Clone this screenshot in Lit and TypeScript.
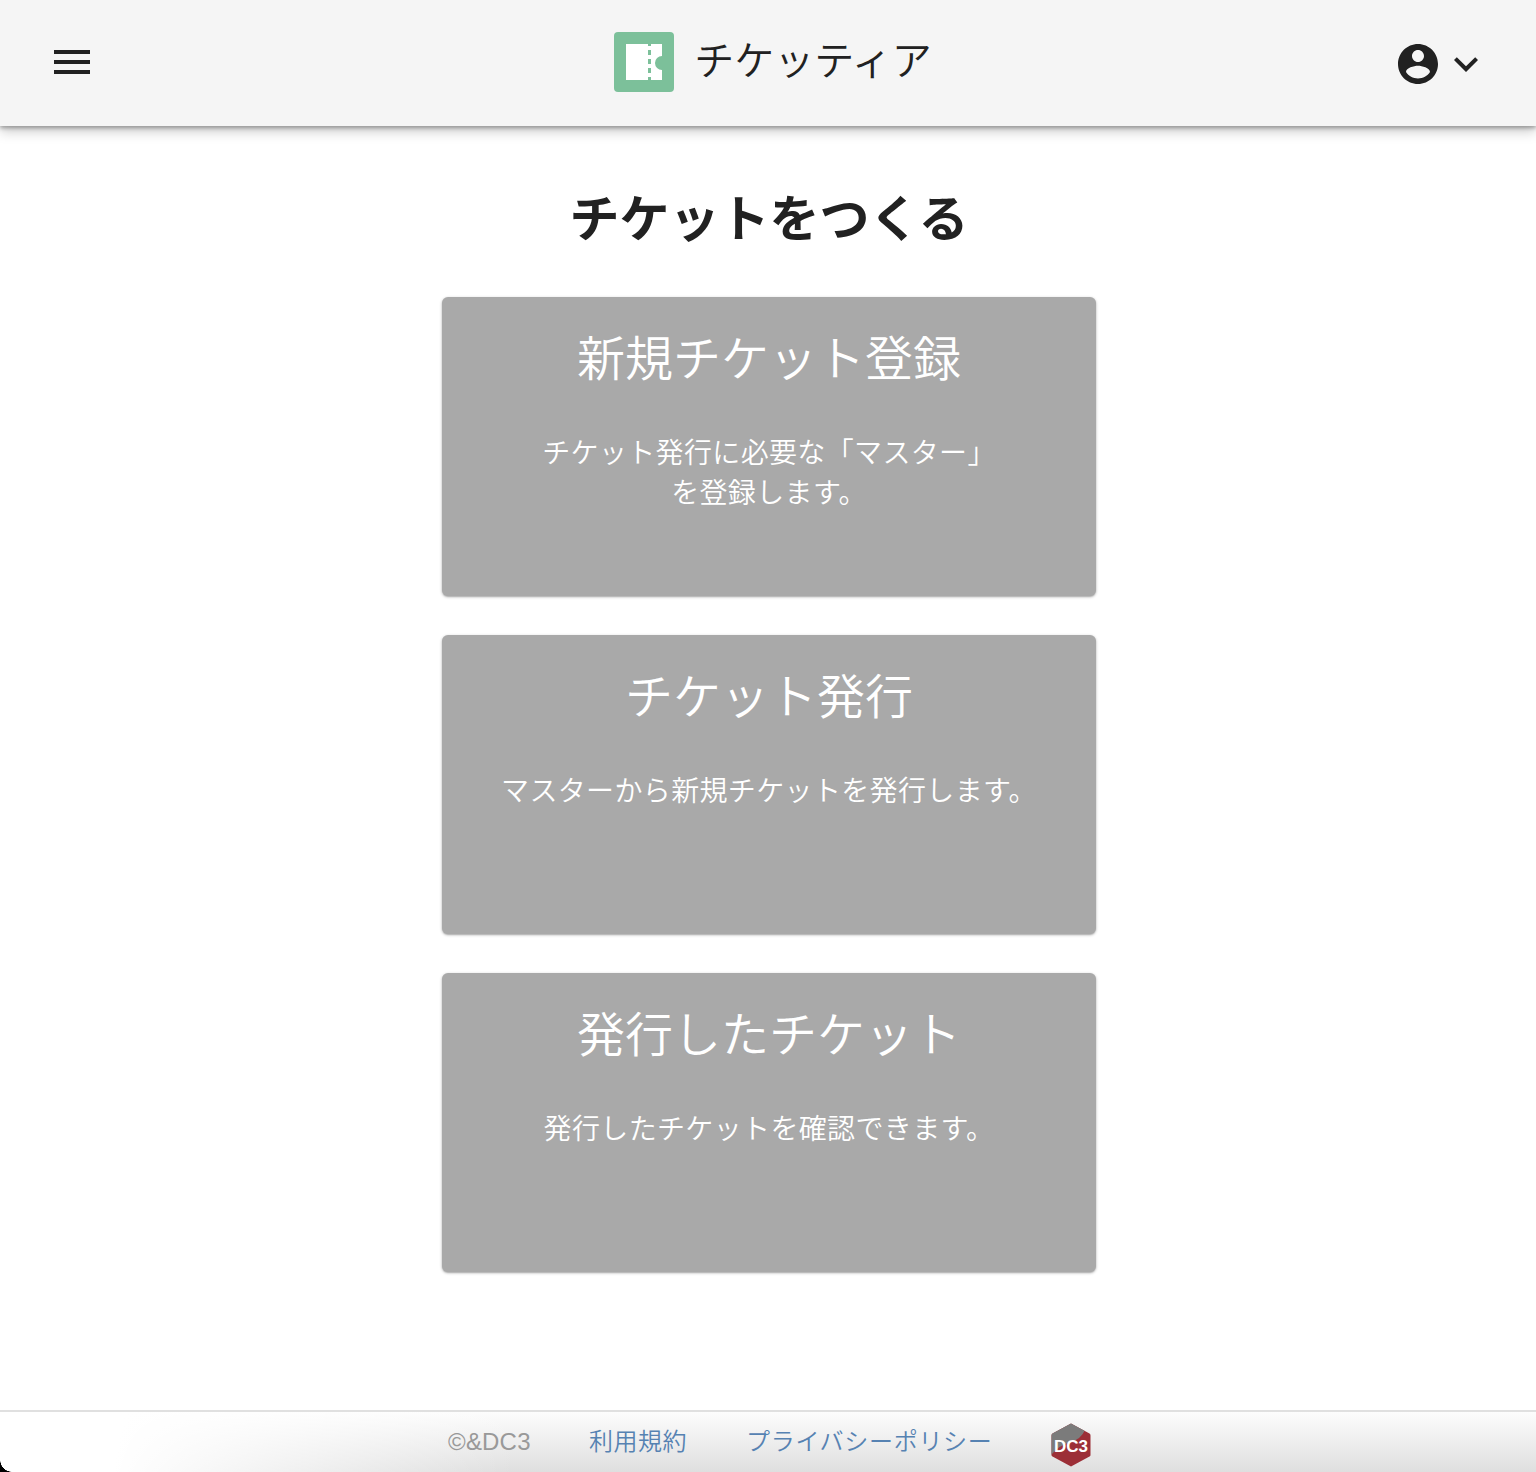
import { LitElement, html, css, svg } from "lit";
import { customElement } from "lit/decorators.js";

const CARDS = [
  { title: "新規チケット登録", lines: ["チケット発行に必要な「マスター」", "を登録します。"] },
  { title: "チケット発行", lines: ["マスターから新規チケットを発行します。"] },
  { title: "発行したチケット", lines: ["発行したチケットを確認できます。"] },
];

const menuIcon = svg`<svg class="menu" viewBox="0 0 36 24" width="36" height="24" aria-hidden="true"><path fill="#212121" d="M0 0h36v4H0zM0 10h36v4H0zM0 20h36v4H0z"/></svg>`;

const logo = svg`<svg class="logo" viewBox="0 0 60 60" width="60" height="60" aria-hidden="true">
  <rect width="60" height="60" rx="4" fill="#7cc09a"/>
  <path fill="#fff" d="M12 12h36v12a7 7 0 0 0 0 14v10H12z"/>
  <path fill="#7cc09a" d="M34 12h3v2h-3zM34 18h3v5h-3zM34 27h3v5h-3zM34 36h3v5h-3zM34 45h3v3h-3z"/>
</svg>`;

const account = svg`<svg viewBox="0 0 24 24" width="48" height="48" aria-hidden="true"><path fill="#212121" d="M12 2C6.48 2 2 6.48 2 12s4.48 10 10 10 10-4.48 10-10S17.52 2 12 2zm0 3c1.66 0 3 1.34 3 3s-1.34 3-3 3-3-1.34-3-3 1.34-3 3-3zm0 14.2c-2.5 0-4.71-1.28-6-3.22.03-1.99 4-3.08 6-3.08 1.99 0 5.97 1.09 6 3.08-1.29 1.94-3.5 3.22-6 3.22z"/></svg>`;

const chevron = svg`<svg viewBox="0 0 24 24" width="48" height="48" aria-hidden="true"><path fill="#212121" d="M16.59 8.59L12 13.17 7.41 8.59 6 10l6 6 6-6z"/></svg>`;

const dc3 = svg`<svg class="dc3" viewBox="0 0 40 44" width="40" height="44" aria-hidden="true">
  <defs><clipPath id="hex"><path d="M20 0.5 38.5 10.5Q39.5 11 39.5 12.5V32Q39.5 33 38.5 33.5L20 43.5 1.5 33.5Q0.5 33 0.5 32V12.5Q0.5 11 1.5 10.5z"/></clipPath></defs>
  <g clip-path="url(#hex)">
    <rect width="40" height="44" fill="#9c2f37"/>
    <path fill="#7b7b7b" d="M0 0H34V7Q30 16 20 19 8 22 0 32z"/>
  </g>
  <text x="20" y="29" text-anchor="middle" class="dc3-text" textLength="34" lengthAdjust="spacingAndGlyphs">DC3</text>
</svg>`;

@customElement("app-root")
export class AppRoot extends LitElement {
  static styles = css`
    :host {
      display: block;
      background: #fff;
      font-family: "Liberation Sans", "Noto Sans CJK JP", sans-serif;
      color: #212121;
    }
    .page {
      position: relative;
      min-height: 1472px;
      display: flex;
      flex-direction: column;
      overflow: hidden;
    }
    header {
      height: 126px;
      box-sizing: border-box;
      padding: 0 46px 2px 54px;
      background: #f5f5f5;
      display: grid;
      grid-template-columns: 1fr auto 1fr;
      align-items: center;
      box-shadow: 0 2px 4px rgba(0,0,0,.3), 0 5px 12px rgba(0,0,0,.22);
      position: relative;
      z-index: 1;
    }
    .menu { display: block; }
    .brand {
      display: flex;
      align-items: center;
      gap: 20px;
      margin-left: 2px;
    }
    .logo { display: block; }
    .brand span {
      font-size: 40px;
      line-height: 60px;
      margin-bottom: 9px;
      font-family: "Noto Sans CJK JP", sans-serif;
      font-weight: 350;
      color: #212121;
    }
    .user {
      justify-self: end;
      display: flex;
      margin-top: 4px;
    }
    .user svg { display: block; }
    main {
      flex: 1;
      display: flex;
      flex-direction: column;
      align-items: center;
      padding-left: 2px;
    }
    h1 {
      margin: 58px 0 51px;
      font-size: 50px;
      line-height: 62px;
      font-weight: 700;
      color: #212121;
      font-family: "Noto Sans CJK JP", sans-serif;
    }
    .cards {
      display: flex;
      flex-direction: column;
      gap: 39px;
    }
    .card {
      width: 654px;
      height: 299px;
      box-sizing: border-box;
      background: #a9a9a9;
      border-radius: 6px;
      box-shadow: 0 1px 3px rgba(0,0,0,.3), 0 1px 1px rgba(0,0,0,.1);
      color: #fff;
      text-align: center;
      padding-top: 24px;
      font-family: "Noto Sans CJK JP", sans-serif;
    }
    .card h2 {
      margin: 0;
      font-size: 48px;
      line-height: 68px;
      font-weight: 350;
    }
    .card p {
      margin: 42px 0 0;
      font-size: 28px;
      line-height: 40px;
      font-weight: 350;
      letter-spacing: 0.35px;
    }
    footer {
      height: 62px;
      border-top: 2px solid #e0e0e0;
      box-sizing: border-box;
      background:
        linear-gradient(100deg, #fff 0%, #fff 8%, rgba(255,255,255,0) 34%),
        linear-gradient(#fdfdfd, #dfdfdf);
      display: flex;
      align-items: flex-start;
      padding: 14px 0 0 448px;
      font-size: 24px;
      line-height: 32px;
      position: relative;
    }
    footer .copy { color: #999; width: 141px; letter-spacing: 0.2px; }
    footer a {
      color: #5682b2;
      text-decoration: none;
      font-family: "Noto Sans CJK JP", sans-serif;
      font-weight: 350;
      letter-spacing: 0.5px;
      margin-top: -2px;
    }
    footer .terms { width: 157px; }
    footer .privacy { width: 305px; letter-spacing: 0.7px; }
    .dc3 { display: block; margin-top: -3px; overflow: visible; }
    .dc3-text { font: 700 17px "Liberation Sans", sans-serif; fill: #fff; }
    .corner {
      position: absolute;
      left: 0;
      bottom: 0;
      width: 12px;
      height: 12px;
      background: radial-gradient(circle at 100% 0, transparent 11.5px, #000 12px);
      z-index: 2;
    }
  `;

  render() {
    return html`<div class="page">
      <header>
        <div>${menuIcon}</div>
        <div class="brand">${logo}<span>チケッティア</span></div>
        <div class="user">${account}${chevron}</div>
      </header>
      <main>
        <h1>チケットをつくる</h1>
        <div class="cards">
          ${CARDS.map(
            (c) => html`<section class="card">
              <h2>${c.title}</h2>
              <p>${c.lines.map((l, i) => html`${i ? html`<br />` : ""}${l}`)}</p>
            </section>`
          )}
        </div>
      </main>
      <footer>
        <span class="copy">©&DC3</span>
        <a class="terms" href="#">利用規約</a>
        <a class="privacy" href="#">プライバシーポリシー</a>
        ${dc3}
      </footer>
      <div class="corner"></div>
    </div>`;
  }
}
